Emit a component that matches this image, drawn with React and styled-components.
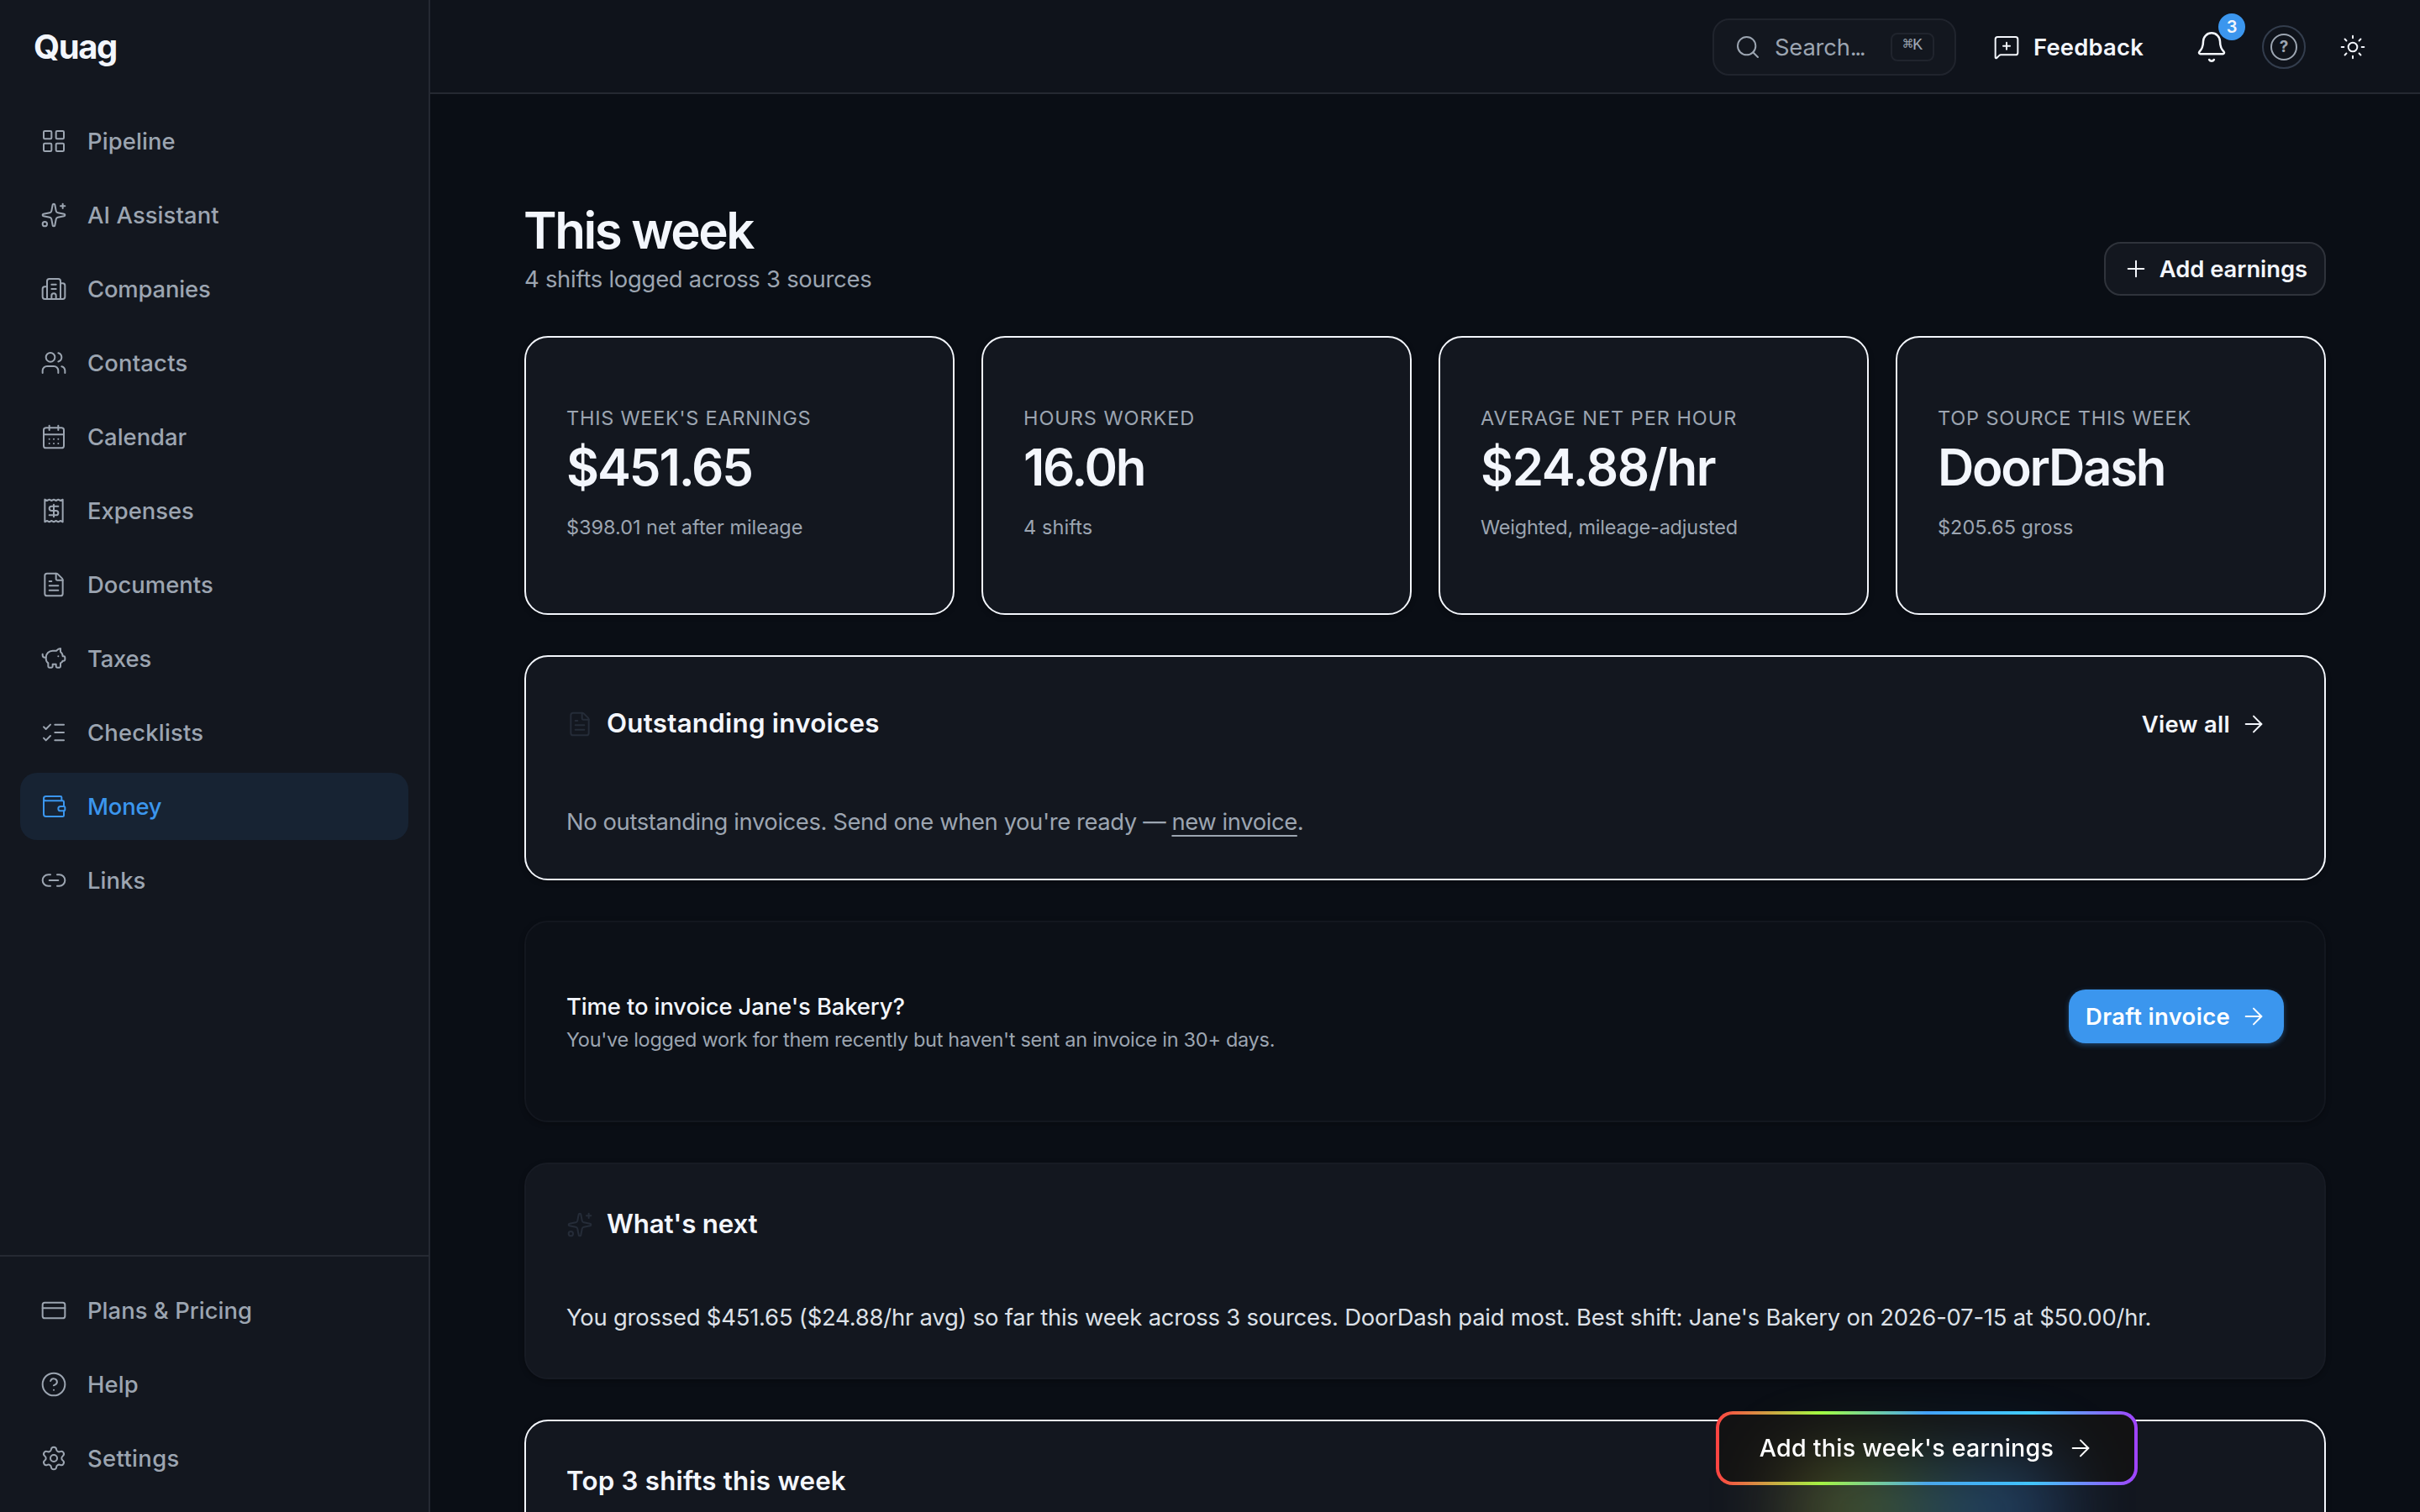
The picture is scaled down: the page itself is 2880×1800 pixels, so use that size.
import styled, { createGlobalStyle } from 'styled-components';
import {
   ArrowRight,
   Bell,
   Building2,
   CalendarDays,
   CircleHelp,
   CreditCard,
   FileText,
   LayoutGrid,
   Link2,
   ListChecks,
   MessageSquarePlus,
   PiggyBank,
   Plus,
   Receipt,
   Search,
   Settings,
   Sparkles,
   Sun,
   Users,
   Wallet,
} from 'lucide-react';

const GlobalStyle = createGlobalStyle`
   * {
      box-sizing: border-box;
   }
   body {
      margin: 0;
      background: #0a0e15;
      color: #f3f6fc;
      font-family: Inter, 'Liberation Sans', sans-serif;
      font-size: 27.4px;
      overflow: hidden;
   }
   h1, h2, p {
      margin: 0;
   }
   svg {
      flex-shrink: 0;
   }
`;

const Page = styled.div`
   display: flex;
   height: 1800px;
   overflow: hidden;
`;

/* Sidebar */
const Sidebar = styled.aside`
   width: 512px;
   flex-shrink: 0;
   display: flex;
   flex-direction: column;
   background-color: #13171f;
   border-right: 2px solid #252932;
`;
const Logo = styled.div`
   height: 112px;
   padding-left: 40px;
   line-height: 112px;
   font-size: 40px;
   font-weight: 700;
   letter-spacing: -1.4px;
`;
const Nav = styled.nav`
   flex: 1;
   display: flex;
   flex-direction: column;
   gap: 8px;
   padding: 16px 24px;
`;
const FooterNav = styled(Nav)`
   flex: none;
   padding: 24px;
   border-top: 2px solid #252932;
`;
const NavItem = styled.a`
   display: flex;
   align-items: center;
   gap: 24px;
   height: 80px;
   padding: 0 24px;
   border-radius: 20px;
   font-weight: 500;
   letter-spacing: ${(props) => props.$spacing || 0}px;
   color: ${(props) => (props.$active ? '#3b96ee' : '#9ca5b1')};
   background-color: ${(props) => (props.$active ? '#172333' : 'transparent')};
`;

/* Header */
const Main = styled.div`
   flex: 1;
   min-width: 0;
   display: flex;
   flex-direction: column;
`;
const Header = styled.header`
   height: 112px;
   flex-shrink: 0;
   display: flex;
   align-items: center;
   justify-content: flex-end;
   padding: 2px 64px 0 0;
   background-color: #0f131b;
   border-bottom: 2px solid #252932;
`;
const SearchBox = styled.div`
   display: flex;
   align-items: center;
   width: 290px;
   height: 68px;
   padding: 0 24px;
   gap: 16px;
   margin-right: 44px;
   border: 2px solid #20242d;
   border-radius: 20px;
   background-color: #13171f;
   color: #9ca5b1;
   letter-spacing: -0.2px;
`;
const Dots = styled.span`
   letter-spacing: -2.4px;
`;
const Kbd = styled.kbd`
   margin-left: auto;
   width: 52px;
   height: 34px;
   line-height: 26px;
   text-align: center;
   border: 2px solid #20242d;
   border-radius: 8px;
   font-family: 'Liberation Mono', 'DejaVu Sans Mono', monospace;
   font-size: 20px;
   letter-spacing: -0.6px;
`;
const Feedback = styled.div`
   display: flex;
   align-items: center;
   gap: 16px;
   width: 180px;
   font-weight: 600;
   letter-spacing: 0.2px;
`;
const BellButton = styled.div`
   position: relative;
   display: flex;
   margin-left: 60px;
`;
const Badge = styled.span`
   position: absolute;
   top: -20px;
   right: -20px;
   width: 32px;
   height: 32px;
   border-radius: 50%;
   background-color: #3b96ee;
   font-size: 20px;
   font-weight: 600;
   line-height: 33px;
   text-align: center;
`;
const HelpButton = styled.div`
   display: flex;
   align-items: center;
   justify-content: center;
   width: 52px;
   height: 52px;
   margin: 0 40px;
   border: 2px solid #333d4d;
   border-radius: 50%;
`;
const HelpMark = styled.span`
   width: 32px;
   height: 32px;
   border: 2px solid #9ca5b1;
   border-radius: 50%;
   color: #9ca5b1;
   font-size: 19px;
   font-weight: 700;
   line-height: 27px;
   text-align: center;
`;

/* Content */
const Content = styled.main`
   display: flex;
   flex-direction: column;
   gap: 48px;
   padding: 128px 112px 0;
`;
const TitleRow = styled.div`
   display: flex;
   justify-content: space-between;
   align-items: flex-end;
   height: 112px;
`;
const Title = styled.h1`
   margin: 0 0 4px -1px;
   font-size: 60px;
   font-weight: 600;
   line-height: 68px;
   letter-spacing: -2.4px;
`;
const Subtitle = styled.p`
   color: #9ca5b1;
   line-height: 40px;
   letter-spacing: -0.25px;
`;
const Button = styled.button`
   display: flex;
   align-items: center;
   gap: 12px;
   height: 64px;
   padding: 0 20px;
   border: none;
   border-radius: 20px;
   background: none;
   color: #f3f6fc;
   font: inherit;
   font-weight: 600;
   letter-spacing: 0.3px;
`;
const OutlineButton = styled(Button)`
   border: 2px solid #2f333b;
   background-color: #13171f;
   letter-spacing: -0.05px;
`;
const PrimaryButton = styled(Button)`
   background-color: #3b96ee;
   color: #fff;
   letter-spacing: 0.35px;
   box-shadow: 0 2px 6px rgba(59, 150, 238, 0.4);
`;
const Stats = styled.div`
   display: grid;
   grid-template-columns: repeat(4, 1fr);
   gap: 32px;
`;
const Card = styled.section`
   border: 2px solid ${(props) => (props.$muted ? '#171b24' : '#f3f6fc')};
   border-radius: 28px;
   background-color: #13171f;
   padding: 0 48px;
   height: ${(props) => props.$height}px;
   box-shadow: 0 2px 6px rgba(0, 0, 0, 0.3);
`;
const StatCard = styled(Card)`
   padding-top: 80px;
`;
const StatLabel = styled.p`
   color: #9ca5b1;
   font-size: 23.5px;
   line-height: 32px;
   letter-spacing: ${(props) => props.$spacing}px;
`;
const StatValue = styled.p`
   font-size: 60px;
   font-weight: 600;
   line-height: 84px;
   letter-spacing: ${(props) => props.$spacing}px;
`;
const Small = styled.p`
   color: #9ca5b1;
   font-size: 23.5px;
   line-height: 40px;
   letter-spacing: ${(props) => props.$spacing}px;
`;
const StatNote = styled(Small)`
   margin-top: 10px;
`;
const CardHead = styled.div`
   display: flex;
   align-items: center;
   justify-content: space-between;
   height: 64px;
   margin-top: ${(props) => props.$top}px;
`;
const CardTitle = styled.h2`
   display: flex;
   align-items: center;
   gap: 16px;
   font-size: 31.3px;
   font-weight: 600;
   letter-spacing: ${(props) => props.$spacing}px;

   svg {
      color: #252c38;
   }
   span {
      padding-bottom: 2px;
   }
`;
const Body = styled.p`
   line-height: 44px;
   margin-top: ${(props) => props.$top}px;
   color: ${(props) => (props.$bright ? '#dde1e8' : '#9ca5b1')};
   letter-spacing: ${(props) => props.$spacing}px;

   a {
      text-decoration: underline;
      text-underline-offset: 6px;
      text-decoration-thickness: 2px;
   }
`;
const Prompt = styled(Card)`
   display: flex;
   align-items: flex-start;
   justify-content: space-between;
   padding-top: 80px;
   background-color: #0c1017;
   border-color: #13171f;
`;
const PromptTitle = styled.p`
   line-height: 40px;
   font-weight: 500;
   letter-spacing: -0.1px;
`;

/* Floating call to action with the rainbow border */
const FloatingButton = styled.button`
   position: fixed;
   left: 2042px;
   top: 1680px;
   width: 502px;
   height: 88px;
   display: flex;
   align-items: center;
   justify-content: center;
   gap: 16px;
   border: 4px solid transparent;
   border-radius: 20px;
   background:
      linear-gradient(#121213, #121213) padding-box,
      linear-gradient(90deg, #ff4242, #a1ff42 25%, #42a1ff 50%, #42d0ff 75%, #a142ff) border-box;
   color: #fff;
   font: inherit;
   font-size: 28.6px;
   font-weight: 500;
   letter-spacing: 0.25px;

   /* soft glow that spills out under the button */
   &::before {
      content: '';
      position: absolute;
      left: 17%;
      bottom: -88px;
      width: 64%;
      height: 110px;
      background: linear-gradient(90deg, #c8a042, #a1e050 28%, #42a1d8 62%, #4290ff);
      filter: blur(48px);
      opacity: 0.38;
   }
   span, svg {
      position: relative;
   }
   span {
      padding-bottom: 2px;
   }
`;

const iconProps = { size: 32, strokeWidth: 1.5 };

const navItems = [
   { label: 'Pipeline', icon: LayoutGrid, spacing: 0.1 },
   { label: 'AI Assistant', icon: Sparkles, spacing: 0.1 },
   { label: 'Companies', icon: Building2, spacing: -0.15 },
   { label: 'Contacts', icon: Users, spacing: 0.2 },
   { label: 'Calendar', icon: CalendarDays },
   { label: 'Expenses', icon: Receipt },
   { label: 'Documents', icon: FileText, spacing: 0.05 },
   { label: 'Taxes', icon: PiggyBank, spacing: -0.2 },
   { label: 'Checklists', icon: ListChecks, spacing: 0.2 },
   { label: 'Money', icon: Wallet, active: true, spacing: -0.2 },
   { label: 'Links', icon: Link2, spacing: 0.1 },
];

const footerItems = [
   { label: 'Plans & Pricing', icon: CreditCard, spacing: 0.05 },
   { label: 'Help', icon: CircleHelp, spacing: 0.1 },
   { label: 'Settings', icon: Settings, spacing: 0.35 },
];

// spacing: [label, value, note]
const stats = [
   {
      label: "THIS WEEK'S EARNINGS",
      value: '$451.65',
      note: '$398.01 net after mileage',
      spacing: [0.75, -2.1, -0.03],
   },
   { label: 'HOURS WORKED', value: '16.0h', note: '4 shifts', spacing: [0.95, -2.3, 0.1] },
   {
      label: 'AVERAGE NET PER HOUR',
      value: '$24.88/hr',
      note: 'Weighted, mileage-adjusted',
      spacing: [0.95, -1.3, -0.22],
   },
   { label: 'TOP SOURCE THIS WEEK', value: 'DoorDash', note: '$205.65 gross', spacing: [0.83, -2.3, 0] },
];

const renderItem = ({ label, icon: Icon, active, spacing }) => (
   <NavItem key={label} $active={active} $spacing={spacing}>
      <Icon {...iconProps} />
      {label}
   </NavItem>
);

const App = () => {
   return (
      <>
         <GlobalStyle />
         <Page>
            <Sidebar>
               <Logo>Quag</Logo>
               <Nav>{navItems.map(renderItem)}</Nav>
               <FooterNav>{footerItems.map(renderItem)}</FooterNav>
            </Sidebar>
            <Main>
               <Header>
                  <SearchBox>
                     <Search {...iconProps} />
                     <span>
                        Search<Dots>...</Dots>
                     </span>
                     <Kbd>⌘K</Kbd>
                  </SearchBox>
                  <Feedback>
                     <MessageSquarePlus {...iconProps} />
                     Feedback
                  </Feedback>
                  <BellButton>
                     <Bell size={40} strokeWidth={1.5} />
                     <Badge>3</Badge>
                  </BellButton>
                  <HelpButton>
                     <HelpMark>?</HelpMark>
                  </HelpButton>
                  <Sun {...iconProps} />
               </Header>
               <Content>
                  <TitleRow>
                     <div>
                        <Title>This week</Title>
                        <Subtitle>4 shifts logged across 3 sources</Subtitle>
                     </div>
                     <OutlineButton>
                        <Plus {...iconProps} />
                        Add earnings
                     </OutlineButton>
                  </TitleRow>
                  <Stats>
                     {stats.map(({ label, value, note, spacing }) => (
                        <StatCard key={label} $height={332}>
                           <StatLabel $spacing={spacing[0]}>{label}</StatLabel>
                           <StatValue $spacing={spacing[1]}>{value}</StatValue>
                           <StatNote $spacing={spacing[2]}>{note}</StatNote>
                        </StatCard>
                     ))}
                  </Stats>
                  <Card $height={268}>
                     <CardHead $top={48}>
                        <CardTitle $spacing={0.25}>
                           <FileText {...iconProps} />
                           <span>Outstanding invoices</span>
                        </CardTitle>
                        <Button>
                           View all
                           <ArrowRight {...iconProps} />
                        </Button>
                     </CardHead>
                     <Body $top={62} $spacing={-0.4}>
                        No outstanding invoices. Send one when you're ready — <a>new invoice</a>.
                     </Body>
                  </Card>
                  <Prompt $height={240}>
                     <div>
                        <PromptTitle>Time to invoice Jane's Bakery?</PromptTitle>
                        <Small $spacing={-0.29}>
                           You've logged work for them recently but haven't sent an invoice in 30+ days.
                        </Small>
                     </div>
                     <PrimaryButton>
                        Draft invoice
                        <ArrowRight {...iconProps} />
                     </PrimaryButton>
                  </Prompt>
                  <Card $muted $height={258}>
                     <CardHead $top={40}>
                        <CardTitle $spacing={-0.2}>
                           <Sparkles {...iconProps} />
                           <span>What's next</span>
                        </CardTitle>
                     </CardHead>
                     <Body $bright $top={56} $spacing={-0.2}>
                        You grossed $451.65 ($24.88/hr avg) so far this week across 3 sources. DoorDash paid most. Best
                        shift: Jane's Bakery on 2026-07-15 at $50.00/hr.
                     </Body>
                  </Card>
                  <Card $height={400}>
                     <CardHead $top={40}>
                        <CardTitle $spacing={0.22}>
                           <span>Top 3 shifts this week</span>
                        </CardTitle>
                     </CardHead>
                  </Card>
               </Content>
            </Main>
         </Page>
         <FloatingButton>
            <span>Add this week's earnings</span>
            <ArrowRight {...iconProps} />
         </FloatingButton>
      </>
   );
};

export default App;
